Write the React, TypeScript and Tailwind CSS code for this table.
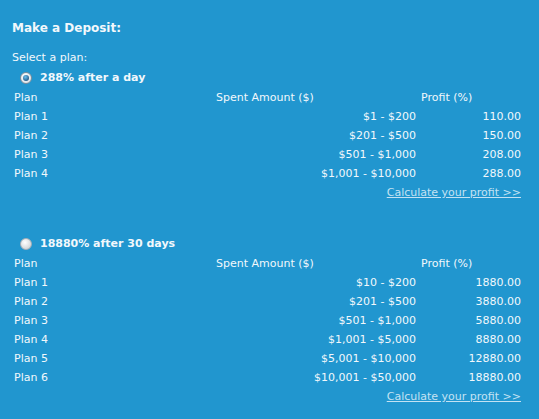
const plans1 = [
  { name: "Plan 1", amount: "$1 - $200", profit: "110.00" },
  { name: "Plan 2", amount: "$201 - $500", profit: "150.00" },
  { name: "Plan 3", amount: "$501 - $1,000", profit: "208.00" },
  { name: "Plan 4", amount: "$1,001 - $10,000", profit: "288.00" },
];

const plans2 = [
  { name: "Plan 1", amount: "$10 - $200", profit: "1880.00" },
  { name: "Plan 2", amount: "$201 - $500", profit: "3880.00" },
  { name: "Plan 3", amount: "$501 - $1,000", profit: "5880.00" },
  { name: "Plan 4", amount: "$1,001 - $5,000", profit: "8880.00" },
  { name: "Plan 5", amount: "$5,001 - $10,000", profit: "12880.00" },
  { name: "Plan 6", amount: "$10,001 - $50,000", profit: "18880.00" },
];

type Row = { name: string; amount: string; profit: string };

function Radio({ checked }: { checked: boolean }) {
  if (checked) {
    return (
      <span className="w-[12px] h-[12px] rounded-full border border-[#7f8f9c] bg-[radial-gradient(circle_at_40%_35%,#ffffff,#d6dee5)] flex items-center justify-center shrink-0">
        <span className="w-[6px] h-[6px] rounded-full bg-[radial-gradient(circle_at_40%_35%,#6cc0f0,#0a3a66)]" />
      </span>
    );
  }
  return (
    <span className="w-[12px] h-[12px] rounded-full border border-[#a7b0b8] bg-[radial-gradient(circle_at_40%_35%,#ffffff,#c4c9ce)] shrink-0" />
  );
}

function PlanSection({ title, checked, rows }: { title: string; checked: boolean; rows: Row[] }) {
  return (
    <div>
      <div className="h-[20px] flex items-center pl-[8px] gap-[8px]">
        <Radio checked={checked} />
        <span className="font-bold text-[11px]">{title}</span>
      </div>
      <div className="grid grid-cols-[202px_205px_104px] text-[11px] leading-[19px]">
        <div className="pl-[2px]">Plan</div>
        <div className="pl-[2px]">Spent Amount ($)</div>
        <div className="pl-[2px]">Profit (%)</div>
        {rows.map((r) => (
          <div key={r.name} className="contents">
            <div className="pl-[2px]">{r.name}</div>
            <div className="text-right pr-[3px]">{r.amount}</div>
            <div className="text-right pr-[2px]">{r.profit}</div>
          </div>
        ))}
      </div>
      <div className="w-[511px] flex justify-end text-[11px] leading-[19px] pr-[2px]">
        <a href="#" className="text-[#c3e2f3] underline">
          Calculate your profit &gt;&gt;
        </a>
      </div>
    </div>
  );
}

export default function App() {
  return (
    <div
      className="w-[539px] h-[419px] bg-[#2196cf] text-[#f2f8fc] px-[12px] pt-[19px] overflow-hidden"
      style={{ fontFamily: '"DejaVu Sans", Verdana, sans-serif' }}
    >
      <h2 className="font-bold text-[12px] leading-[18px]">Make a Deposit:</h2>
      <div className="mt-[12px] text-[11px] leading-[18px]">Select a plan:</div>
      <div className="mt-[1px]">
        <PlanSection title="288% after a day" checked rows={plans1} />
      </div>
      <div className="mt-[32px]">
        <PlanSection title="18880% after 30 days" checked={false} rows={plans2} />
      </div>
    </div>
  );
}
